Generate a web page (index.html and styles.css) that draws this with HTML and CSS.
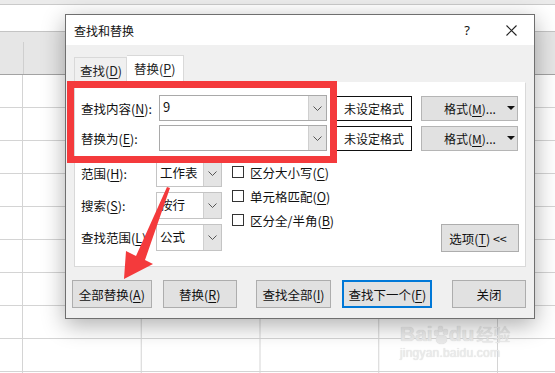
FILE: index.html
```html
<!DOCTYPE html>
<html lang="zh-CN">
<head>
    <meta charset="UTF-8">
    <title>查找和替换</title>
    <link rel="stylesheet" href="styles.css">
</head>
<body>
    <div id="sheet">
        <div class="sheet-top"></div>
        <div class="sheet-bar"></div>
        <div class="sheet-head"><span class="head-line"></span></div>
        <div class="sheet-grid"></div>
    </div>

    <div class="watermark">
        <div class="wm-logo">Bai<span class="paw"><i></i><i></i><i></i><b></b></span>du <span class="wm-cn">经验</span></div>
        <div class="wm-url">jingyan.baidu.com</div>
    </div>

    <div id="dialog">
        <div class="titlebar">
            <span class="title">查找和替换</span>
            <span class="help">?</span>
            <svg class="close" width="11" height="11" viewBox="0 0 11 11"><path d="M0.5 0.5 L10.5 10.5 M10.5 0.5 L0.5 10.5" stroke="#222" stroke-width="1.1" fill="none"/></svg>
        </div>
        <div class="dialog-body">
            <div class="tabs">
                <div class="tab">查找(<u>D</u>)</div>
                <div class="tab active">替换(<u>P</u>)</div>
            </div>
            <div class="panel">
                <div class="field-row">
                    <label class="field-label">查找内容(<u>N</u>):</label>
                    <div class="combo"><span class="combo-text">9</span><span class="drop"><svg width="9" height="5" viewBox="0 0 9 5"><path d="M0.5 0.5 L4.5 4.5 L8.5 0.5" stroke="#555" fill="none"/></svg></span></div>
                    <div class="fmt-box">未设定格式</div>
                    <div class="fmt-btn">格式(<u>M</u>)...<span class="caret"></span></div>
                </div>
                <div class="field-row">
                    <label class="field-label">替换为(<u>E</u>):</label>
                    <div class="combo"><span class="combo-text"></span><span class="drop"><svg width="9" height="5" viewBox="0 0 9 5"><path d="M0.5 0.5 L4.5 4.5 L8.5 0.5" stroke="#555" fill="none"/></svg></span></div>
                    <div class="fmt-box">未设定格式</div>
                    <div class="fmt-btn">格式(<u>M</u>)...<span class="caret"></span></div>
                </div>

                <div class="options">
                    <div class="opt-grid">
                        <label>范围(<u>H</u>):</label>
                        <div class="select"><span>工作表</span><span class="drop"><svg width="9" height="5" viewBox="0 0 9 5"><path d="M0.5 0.5 L4.5 4.5 L8.5 0.5" stroke="#555" fill="none"/></svg></span></div>
                        <label>搜索(<u>S</u>):</label>
                        <div class="select"><span>按行</span><span class="drop"><svg width="9" height="5" viewBox="0 0 9 5"><path d="M0.5 0.5 L4.5 4.5 L8.5 0.5" stroke="#555" fill="none"/></svg></span></div>
                        <label>查找范围(<u>L</u>):</label>
                        <div class="select"><span>公式</span><span class="drop"><svg width="9" height="5" viewBox="0 0 9 5"><path d="M0.5 0.5 L4.5 4.5 L8.5 0.5" stroke="#555" fill="none"/></svg></span></div>
                    </div>
                    <div class="checks">
                        <div class="check"><span class="box"></span>区分大小写(<u>C</u>)</div>
                        <div class="check"><span class="box"></span>单元格匹配(<u>O</u>)</div>
                        <div class="check"><span class="box"></span>区分全/半角(<u>B</u>)</div>
                    </div>
                    <div class="btn opt-btn">选项(<u>T</u>) &lt;&lt;</div>
                </div>
            </div>
            <div class="buttons">
                <div class="btn b-all">全部替换(<u>A</u>)</div>
                <div class="btn b-one">替换(<u>R</u>)</div>
                <div class="btn b-findall">查找全部(<u>I</u>)</div>
                <div class="btn b-next">查找下一个(<u>F</u>)</div>
                <div class="btn b-close">关闭</div>
            </div>
        </div>
    </div>

    <!-- annotation overlay -->
    <div class="mark-box"></div>
    <svg class="mark-arrow" width="555" height="373" viewBox="0 0 555 373">
        <polygon points="124,279 126,251 136,256 167,187 170,188 145,260 153,264" fill="#f43a3c"/>
    </svg>
</body>
</html>
```

FILE: styles.css
```css
body {
    margin: 0;
    width: 555px;
    height: 373px;
    overflow: hidden;
    position: relative;
    font-family: "Noto Sans CJK SC", "Noto Sans", sans-serif;
    font-size: 12px;
    color: #111;
    background: #fff;
}
u {
    text-decoration-thickness: 1px;
    text-underline-offset: 2px;
}

/* spreadsheet behind the dialog */
#sheet {
    display: flex;
    flex-direction: column;
    height: 373px;
}
.sheet-top {
    height: 4px;
    background: #ebebeb;
    border-bottom: 1px solid #cacaca;
}
.sheet-bar {
    height: 26px;
    background: #fff;
    border-bottom: 1px solid #c4c4c4;
}
.sheet-head {
    height: 42px;
    background: #e6e6e6;
    border-bottom: 1px solid #a3a3a3;
    display: flex;
    align-items: flex-end;
    padding-left: 23px;
}
.head-line {
    width: 1px;
    height: 32px;
    background: #cfcfcf;
}
.sheet-grid {
    flex: 1;
    background-image:
        linear-gradient(to bottom, transparent 32px, #d4d4d4 32px),
        linear-gradient(to right, #d4d4d4 1px, transparent 1px);
    background-size: 100% 33px, 118.75px 100%;
    background-position: 0 0, 22px 0;
}

.watermark {
    position: absolute;
    left: 400px;
    top: 322px;
    color: #ececec;
    text-shadow: 0 0 1px #d0d0d0;
    font-family: "Liberation Sans", sans-serif;
}
.wm-logo {
    font-size: 21px;
    font-weight: bold;
    line-height: 24px;
    display: flex;
    align-items: flex-end;
}
.wm-cn {
    font-family: "Noto Sans CJK SC", sans-serif;
    font-size: 17px;
    font-weight: normal;
    margin-left: 2px;
}
.paw {
    position: relative;
    width: 14px;
    height: 20px;
    margin: 0 1px;
}
.paw i {
    position: absolute;
    width: 5px;
    height: 6px;
    border-radius: 50%;
    background: #ececec;
    box-shadow: 0 0 1px #cfcfcf;
    top: 0;
}
.paw i:nth-child(1) { left: 0; top: 4px; }
.paw i:nth-child(2) { left: 4px; }
.paw i:nth-child(3) { left: 9px; top: 3px; }
.paw b {
    position: absolute;
    left: 2px;
    top: 9px;
    width: 11px;
    height: 9px;
    border-radius: 50%;
    background: #ececec;
    box-shadow: 0 0 1px #cfcfcf;
}
.wm-url {
    font-size: 12px;
    line-height: 14px;
    letter-spacing: 0.2px;
}

/* dialog window */
#dialog {
    position: absolute;
    left: 65px;
    top: 14px;
    width: 470px;
    height: 305px;
    box-sizing: border-box;
    border: 1px solid #6f6f6f;
    background: #f0f0f0;
    box-shadow: 0 6px 22px rgba(0, 0, 0, 0.32);
    display: flex;
    flex-direction: column;
}
.titlebar {
    height: 30px;
    background: #fff;
    display: flex;
    align-items: center;
    padding-left: 8px;
}
.title {
    font-size: 12px;
    flex: 1;
}
.help {
    font-family: "Noto Sans", sans-serif;
    font-size: 13px;
    margin-right: 36px;
}
.close {
    margin-right: 17px;
}

.dialog-body {
    flex: 1;
    padding: 10px 8px 0 8px;
}
.tabs {
    display: flex;
    align-items: flex-end;
    height: 27px;
}
.tab {
    height: 25px;
    box-sizing: border-box;
    padding: 0 4px 0 5px;
    border: 1px solid #d9d9d9;
    border-bottom: none;
    line-height: 25px;
    font-size: 12.5px;
    color: #222;
}
.tab.active {
    height: 27px;
    line-height: 26px;
    background: #fff;
    border-left: none;
    padding: 0 8px 0 7px;
}
.panel {
    height: 185px;
    box-sizing: border-box;
    background: #fff;
    border: 1px solid #d9d9d9;
    border-top-color: #fff;
    padding: 12px 6px 0 6px;
}
.field-row {
    display: flex;
    align-items: center;
    height: 26px;
    margin-bottom: 4px;
}
.field-label {
    width: 78px;
    font-size: 12.5px;
}
.combo {
    width: 168px;
    height: 26px;
    box-sizing: border-box;
    border: 1px solid #a9a9a9;
    display: flex;
    margin-right: 9px;
}
.combo-text {
    flex: 1;
    padding-left: 3px;
    line-height: 22px;
    font-size: 13px;
}
.drop {
    width: 17px;
    background: #e4e4e4;
    border-left: 1px solid #cfcfcf;
    display: flex;
    align-items: center;
    justify-content: center;
}
.fmt-box {
    width: 76px;
    height: 25px;
    box-sizing: border-box;
    border: 1px solid #111;
    text-align: center;
    line-height: 23px;
    margin-right: 9px;
}
.fmt-btn {
    width: 97px;
    height: 25px;
    box-sizing: border-box;
    background: #e1e1e1;
    border: 1px solid #b5b5b5;
    display: flex;
    align-items: center;
    padding-left: 22px;
}
.caret {
    width: 0;
    height: 0;
    border-left: 4px solid transparent;
    border-right: 4px solid transparent;
    border-top: 4px solid #111;
    margin-left: 11px;
}

.options {
    display: flex;
    margin-top: 9px;
    height: 93px;
}
.opt-grid {
    display: grid;
    grid-template-columns: 75px 66px;
    grid-auto-rows: 27px;
    row-gap: 5px;
    align-items: center;
}
.opt-grid label {
    font-size: 12.5px;
}
.select {
    height: 27px;
    box-sizing: border-box;
    border: 1px solid #c4c4c4;
    display: flex;
}
.select span:first-child {
    flex: 1;
    padding-left: 3px;
    line-height: 24px;
    font-size: 12.5px;
}
.checks {
    margin-left: 10px;
    display: flex;
    flex-direction: column;
}
.check {
    height: 24px;
    display: flex;
    align-items: center;
    font-size: 12.5px;
}
.box {
    width: 12px;
    height: 12px;
    box-sizing: border-box;
    border: 1px solid #333;
    margin-right: 6px;
}
.btn {
    height: 28px;
    box-sizing: border-box;
    background: #e1e1e1;
    border: 1px solid #adadad;
    display: flex;
    align-items: center;
    justify-content: center;
    font-size: 12.5px;
}
.opt-btn {
    width: 78px;
    margin-left: auto;
    align-self: flex-end;
    margin-bottom: 1px;
    padding-right: 4px;
}

.buttons {
    display: flex;
    margin-top: 13px;
    margin-left: -2px;
}
.b-all { width: 80px; margin-right: 11px; }
.b-one { width: 74px; margin-right: 19px; }
.b-findall { width: 76px; margin-right: 11px; }
.b-next { width: 90px; margin-right: 20px; border: 2px solid #0078d7; }
.b-close { width: 74px; }

/* red annotation */
.mark-box {
    position: absolute;
    left: 67px;
    top: 81px;
    width: 270px;
    height: 82px;
    box-sizing: border-box;
    border: 7px solid #f43a3c;
}
.mark-arrow {
    position: absolute;
    left: 0;
    top: 0;
}
```
